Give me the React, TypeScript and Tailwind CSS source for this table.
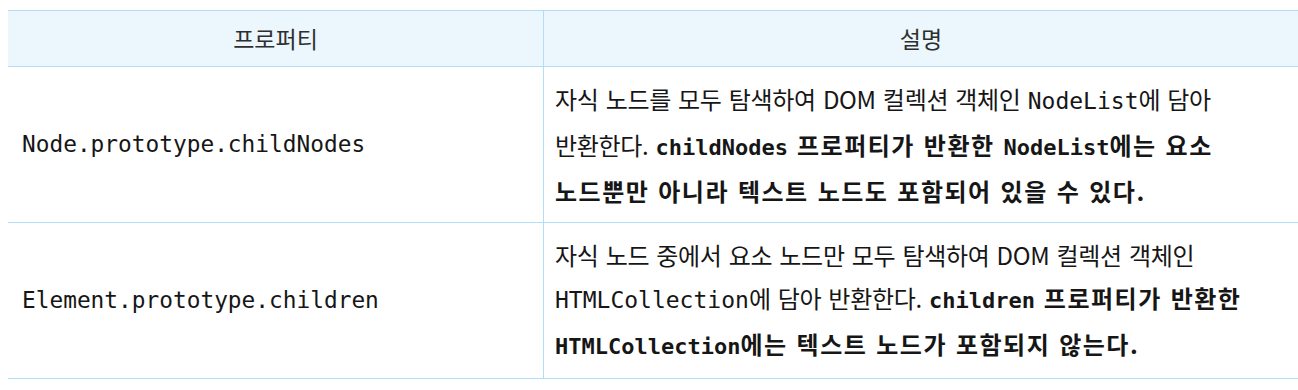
import React from "react";

const mono = "font-['DejaVu_Sans_Mono','Liberation_Mono',monospace]";
const bm = `${mono} text-[23px] tracking-normal`;
const bbm = `${mono} text-[22px] tracking-normal`;

export default function App() {
  return (
    <div className="w-[1298px] h-[390px] bg-white pt-[10px] pl-[8px] font-['Noto_Sans_CJK_KR','Noto_Sans',sans-serif] text-[#161616]">
      <div className="w-[1290px]">
        <div className="flex h-[57px] bg-[#ebf6fd] border-y border-[#b3dcf6] text-[23px] text-[#2e2e2e]">
          <div className="w-[536px] border-r border-[#b3dcf6] flex items-center justify-center">프로퍼티</div>
          <div className="flex-1 flex items-center justify-center">설명</div>
        </div>
        <div className="flex h-[156px] border-b border-[#b3dcf6]">
          <div className={`w-[536px] border-r border-[#b3dcf6] flex items-center pl-[14px] text-[22.8px] ${mono}`}>
            Node.prototype.childNodes
          </div>
          <div className="flex-1 flex items-center pl-[11px] text-[24px] leading-[43px] tracking-[-0.3px] [word-spacing:2px]">
            <div>
              자식 노드를 모두 탐색하여 DOM 컬렉션 객체인 <span className={bm}>NodeList</span>에 담아
              <br />
              반환한다. <span className="font-semibold tracking-[1.5px]"><span className={bbm}>childNodes</span> 프로퍼티가 반환한 <span className={bbm}>NodeList</span>에는 요소
              <br />
              노드뿐만 아니라 텍스트 노드도 포함되어 있을 수 있다.</span>
            </div>
          </div>
        </div>
        <div className="flex h-[156px] border-b border-[#b3dcf6]">
          <div className={`w-[536px] border-r border-[#b3dcf6] flex items-center pl-[14px] text-[22.8px] ${mono}`}>
            Element.prototype.children
          </div>
          <div className="flex-1 flex items-center pl-[11px] text-[24px] leading-[43px] tracking-[-0.3px] [word-spacing:2px]">
            <div>
              자식 노드 중에서 요소 노드만 모두 탐색하여 DOM 컬렉션 객체인
              <br />
              <span className={bm}>HTMLCollection</span>에 담아 반환한다. <span className="font-semibold tracking-[1.5px]"><span className={bbm}>children</span> 프로퍼티가 반환한
              <br />
              <span className={bbm}>HTMLCollection</span>에는 텍스트 노드가 포함되지 않는다.</span>
            </div>
          </div>
        </div>
      </div>
    </div>
  );
}
